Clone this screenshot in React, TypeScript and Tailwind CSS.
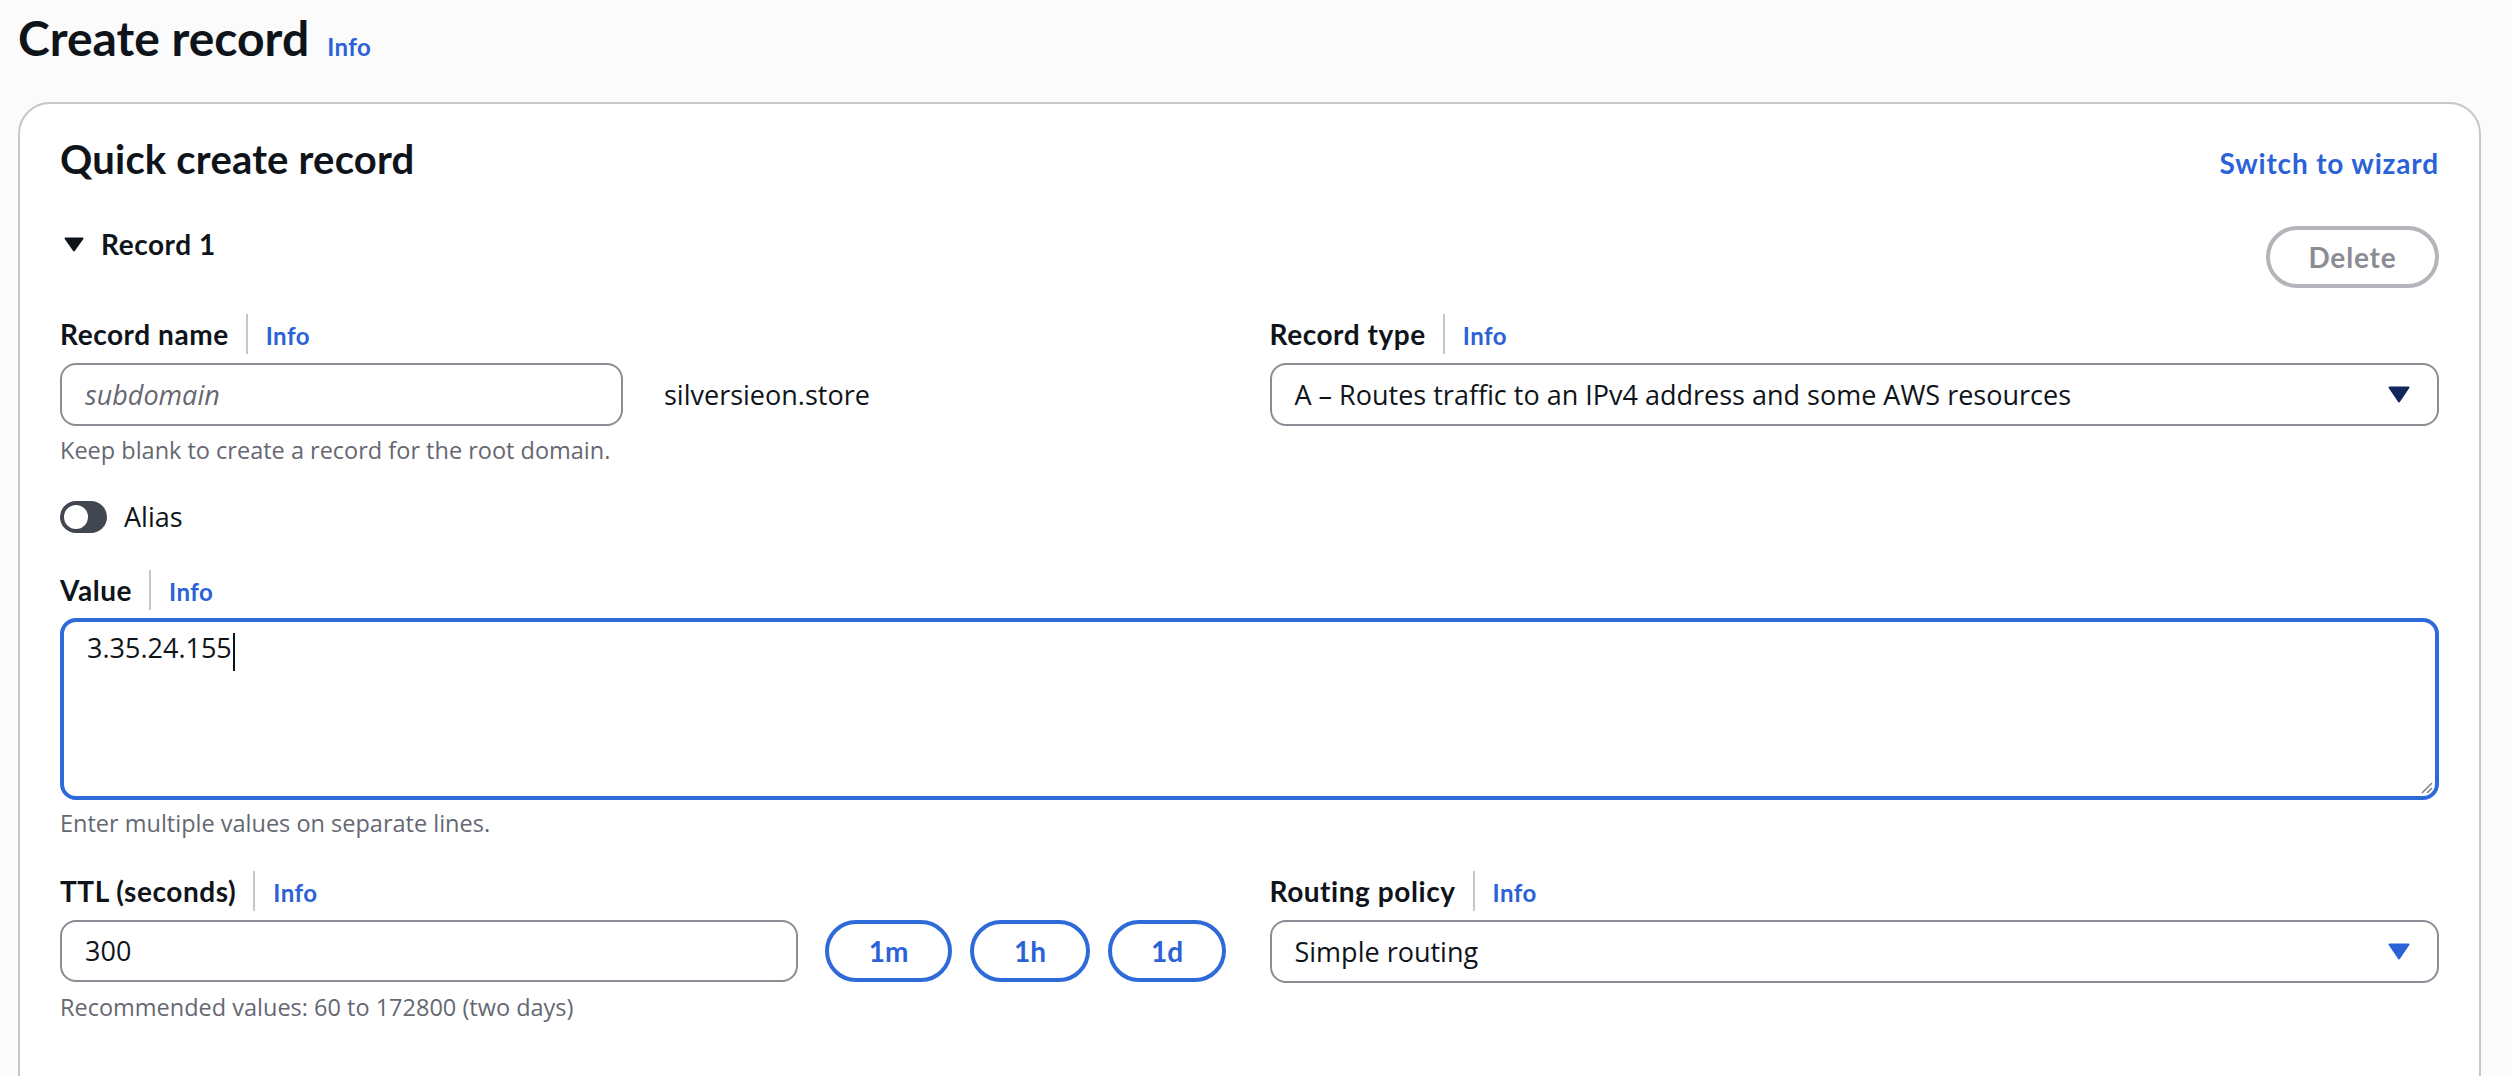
import React from "react";

// bold text in the reference is narrower than Open Sans Bold, Lato fits it better
const B = "font-['Lato',sans-serif] font-bold";

function Label({ text }: { text: string }) {
  return (
    <div className="flex items-baseline h-[40px]">
      <span className={`${B} text-[28px] leading-[40px] tracking-[0.02em] text-[#0f141a]`}>{text}</span>
      <span className="self-center w-[2px] h-[40px] bg-[#c6c6cd] ml-[17px] mr-[18px]" />
      <a className={`${B} text-[24px] leading-[40px] tracking-[0.02em] text-[#2b62d8]`}>Info</a>
    </div>
  );
}

function Caret({ color }: { color: string }) {
  return (
    <svg width="22" height="17" viewBox="0 0 22 17" className="shrink-0">
      <path d="M1.5 1.5h19L11 15.5z" fill={color} stroke={color} strokeWidth="2" strokeLinejoin="round" />
    </svg>
  );
}

function Select({ value, caret }: { value: string; caret: string }) {
  return (
    <div className="flex items-center justify-between h-[63px] border-2 border-[#8c8c94] rounded-[16px] bg-white pl-[23px] pr-[27px]">
      <span className="text-[27px] leading-[40px] text-[#0f141a]">{value}</span>
      <Caret color={caret} />
    </div>
  );
}

function Helper({ text }: { text: string }) {
  return <p className="mt-[8px] text-[23.5px] leading-[32px] text-[#656871]">{text}</p>;
}

export default function App() {
  return (
    <div
      className="min-h-screen bg-[#fbfbfb] pt-[10px] pl-[18px] pr-[31px] text-[#0f141a]"
      style={{ fontFamily: '"Open Sans", "Noto Sans", sans-serif' }}
    >
      {/* page header */}
      <div className="flex items-baseline h-[56px]">
        <h1 className={`${B} text-[48px] leading-[56px]`}>Create record</h1>
        <a className={`${B} ml-[18px] text-[24px] tracking-[0.02em] text-[#2b62d8]`}>Info</a>
      </div>

      {/* card */}
      <div className="mt-[36px] bg-white border-2 border-[#c6c6cd] rounded-[32px] px-[40px] pt-[31px] pb-[90px]">
        <div className="flex items-baseline justify-between">
          <h2 className={`${B} text-[40px] leading-[48px] tracking-[0.005em]`}>Quick create record</h2>
          <a className={`${B} text-[28px] leading-[40px] tracking-[0.03em] text-[#2b62d8]`}>Switch to wizard</a>
        </div>

        <div className="mt-[41px] flex items-start justify-between">
          <div className="flex items-center h-[40px]">
            <svg width="20" height="15" viewBox="0 0 20 15" className="ml-[4px]">
              <path d="M1.5 1.5h17L10 13.5z" fill="#0f141a" stroke="#0f141a" strokeWidth="2" strokeLinejoin="round" />
            </svg>
            <span className={`${B} ml-[17px] text-[28px] leading-[40px] tracking-[0.02em]`}>Record 1</span>
          </div>
          <button className={`${B} mt-[2px] h-[62px] w-[173px] border-4 border-[#b4b4bb] rounded-full text-[28px] tracking-[0.03em] text-[#8c8c94] bg-white`}>
            Delete
          </button>
        </div>

        {/* name + type */}
        <div className="mt-[26px] grid grid-cols-2 gap-x-[40px]">
          <div>
            <Label text="Record name" />
            <div className="mt-[9px] flex items-center">
              <div className="w-[563px] h-[63px] border-2 border-[#8c8c94] rounded-[16px] bg-white pl-[23px] flex items-center">
                <span className="text-[27px] leading-[40px] italic text-[#656871]">subdomain</span>
              </div>
              <span className="ml-[41px] text-[27px] leading-[40px]">silversieon.store</span>
            </div>
            <Helper text="Keep blank to create a record for the root domain." />
          </div>
          <div>
            <Label text="Record type" />
            <div className="mt-[9px]">
              <Select value="A – Routes traffic to an IPv4 address and some AWS resources" caret="#13265c" />
            </div>
          </div>
        </div>

        {/* alias toggle */}
        <div className="mt-[31px] flex items-center h-[40px]">
          <div className="w-[47px] h-[32px] rounded-full bg-[#424650] p-[4px] flex items-center">
            <div className="w-[24px] h-[24px] rounded-full bg-white" />
          </div>
          <span className="ml-[17px] text-[27px] leading-[40px]">Alias</span>
        </div>

        {/* value */}
        <div className="mt-[33px]">
          <Label text="Value" />
          <div className="relative mt-[8px] h-[182px] border-4 border-[#2f6ad9] rounded-[16px] bg-white pl-[23px] pt-[6px]">
            <span className="text-[27px] leading-[40px]">3.35.24.155</span>
            <span className="inline-block align-middle w-[2px] h-[38px] bg-[#0f141a] ml-[1px] -mt-[4px]" />
            <svg width="14" height="14" viewBox="0 0 14 14" className="absolute right-[2px] bottom-[2px]">
              <path d="M13 3L3 13M13 8L8 13" stroke="#7d7d85" strokeWidth="1.5" />
            </svg>
          </div>
          <p className="mt-[7px] text-[23.5px] leading-[32px] text-[#656871]">Enter multiple values on separate lines.</p>
        </div>

        {/* ttl + routing */}
        <div className="mt-[32px] grid grid-cols-2 gap-x-[40px]">
          <div>
            <Label text="TTL (seconds)" />
            <div className="mt-[9px] flex items-center">
              <div className="w-[738px] h-[62px] border-2 border-[#8c8c94] rounded-[16px] bg-white pl-[23px] flex items-center">
                <span className="text-[27px] leading-[40px]">300</span>
              </div>
              <div className="ml-[27px] flex gap-[18px]">
                {[
                  ["1m", "w-[127px]"],
                  ["1h", "w-[120px]"],
                  ["1d", "w-[118px]"],
                ].map(([t, w]) => (
                  <button
                    key={t}
                    className={`${B} ${w} h-[62px] border-4 border-[#2f6ad9] rounded-full bg-white text-[28px] text-[#2b62d8]`}
                  >
                    {t}
                  </button>
                ))}
              </div>
            </div>
            <p className="mt-[9px] text-[23.5px] leading-[32px] text-[#656871]">Recommended values: 60 to 172800 (two days)</p>
          </div>
          <div>
            <Label text="Routing policy" />
            <div className="mt-[9px]">
              <Select value="Simple routing" caret="#2b62d8" />
            </div>
          </div>
        </div>
      </div>
    </div>
  );
}
